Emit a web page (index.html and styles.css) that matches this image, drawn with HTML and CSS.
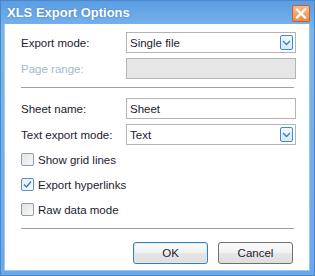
FILE: index.html
```html
<!DOCTYPE html>
<html lang="en">
<head>
  <meta charset="UTF-8" />
  <title>XLS Export Options</title>
  <link rel="stylesheet" href="styles.css">
</head>
<body>
  <div class="window">
    <div class="titlebar">
      <span class="title">XLS Export Options</span>
      <div class="close">
        <svg width="12" height="11" viewBox="0 0 12 11">
          <path d="M2 1.5 L10 9.5 M10 1.5 L2 9.5" stroke="#fff" stroke-width="2.4" stroke-linecap="square"/>
        </svg>
      </div>
    </div>

    <div class="content">
      <div class="row">
        <label>Export mode:</label>
        <div class="field combo">
          <span>Single file</span>
          <span class="drop">
            <svg width="9" height="6" viewBox="0 0 9 6"><path d="M1 1 L4.5 4.5 L8 1" fill="none" stroke="#2f7fcf" stroke-width="1.3"/></svg>
          </span>
        </div>
      </div>
      <div class="row gap">
        <label class="disabled">Page range:</label>
        <div class="field off"></div>
      </div>

      <div class="sep first"></div>

      <div class="row">
        <label>Sheet name:</label>
        <div class="field"><span>Sheet</span></div>
      </div>
      <div class="row gap">
        <label>Text export mode:</label>
        <div class="field combo">
          <span>Text</span>
          <span class="drop">
            <svg width="9" height="6" viewBox="0 0 9 6"><path d="M1 1 L4.5 4.5 L8 1" fill="none" stroke="#2f7fcf" stroke-width="1.3"/></svg>
          </span>
        </div>
      </div>

      <div class="checks">
        <div class="check"><span class="box"></span>Show grid lines</div>
        <div class="check"><span class="box on">
          <svg width="11" height="11" viewBox="0 0 11 11"><path d="M2 5.5 L4.5 8 L9 2.5" fill="none" stroke="#2f7fcf" stroke-width="1.4"/></svg>
        </span>Export hyperlinks</div>
        <div class="check"><span class="box"></span>Raw data mode</div>
      </div>

      <div class="sep last"></div>

      <div class="buttons">
        <button class="btn default">OK</button>
        <button class="btn">Cancel</button>
      </div>
    </div>
  </div>
</body>
</html>
```

FILE: styles.css
```css
body {
  margin: 0;
  font-family: "Liberation Sans", Arial, sans-serif;
  font-size: 11.5px;
  color: #1b1b2e;
  background: #fff;
}

.window {
  width: 315px;
  height: 276px;
  box-sizing: border-box;
  display: flex;
  flex-direction: column;
  background: linear-gradient(#5b9de4, #7cb6ec 30px, #6aa9e8);
  border: 1px solid #4a87c8;
}

.titlebar {
  height: 23px;
  display: flex;
  align-items: center;
  justify-content: space-between;
  padding: 0 4px 0 6px;
}

.title {
  font-weight: bold;
  font-size: 13px;
  color: #fff;
  text-shadow: 0 0 2px rgba(40, 80, 140, 0.5);
}

.close {
  width: 16px;
  height: 15px;
  border: 1px solid #c2642e;
  border-radius: 2px;
  background: linear-gradient(#fbb88a, #ee8a4a);
  display: flex;
  align-items: center;
  justify-content: center;
  margin-top: 2px;
}

.content {
  flex: 1;
  background: #fff;
  margin: 0 4px 4px 3px;
  padding: 8px 15px 0 16px;
  border: 1px solid #9cc6ee;
  border-top: none;
}

.row {
  display: grid;
  grid-template-columns: 105px 170px;
  align-items: center;
  height: 21px;
}

.row.gap {
  margin-top: 5px;
}

label.disabled {
  color: #a6b7cc;
}

.field {
  height: 21px;
  box-sizing: border-box;
  border: 1px solid #b4b4b4;
  background: #fff;
  display: flex;
  align-items: center;
  justify-content: space-between;
  padding: 0 2px 0 3px;
}

.field.off {
  background: #e6e6e6;
}

.drop {
  width: 13px;
  height: 15px;
  box-sizing: border-box;
  border: 1px solid #3d8ad4;
  border-radius: 2px;
  background: linear-gradient(#f4f9fe, #d9e8f7);
  display: flex;
  align-items: center;
  justify-content: center;
}

.sep {
  height: 1px;
  background: #a0a0a0;
}

.sep.first {
  margin: 8px 0 10px;
}

.checks {
  margin-top: 8px;
  display: flex;
  flex-direction: column;
  gap: 12px;
}

.check {
  display: flex;
  align-items: center;
  height: 13px;
}

.box {
  width: 13px;
  height: 13px;
  box-sizing: border-box;
  border: 1px solid #8a9bb3;
  border-radius: 2px;
  background: linear-gradient(135deg, #e3e3e3, #f8f8f8);
  margin-right: 4px;
  display: flex;
  align-items: center;
  justify-content: center;
}

.box.on {
  border-color: #5b8fc7;
  background: linear-gradient(135deg, #e6eef8, #fbfdff);
}

.sep.last {
  margin: 12px 0 13px;
}

.buttons {
  display: flex;
  justify-content: flex-end;
  gap: 10px;
  padding-right: 1px;
}

.btn {
  width: 75px;
  height: 22px;
  font-family: "Liberation Sans", Arial, sans-serif;
  font-size: 11.5px;
  color: #1b1b2e;
  border: 1px solid #707070;
  border-radius: 3px;
  background: linear-gradient(#fbfbfb, #f1f1f1 50%, #e6e6e6 51%, #dedede);
  padding: 0;
}

.btn.default {
  border-color: #3c7fb1;
  box-shadow: inset 0 0 0 1px #d4ebfa;
}
```
